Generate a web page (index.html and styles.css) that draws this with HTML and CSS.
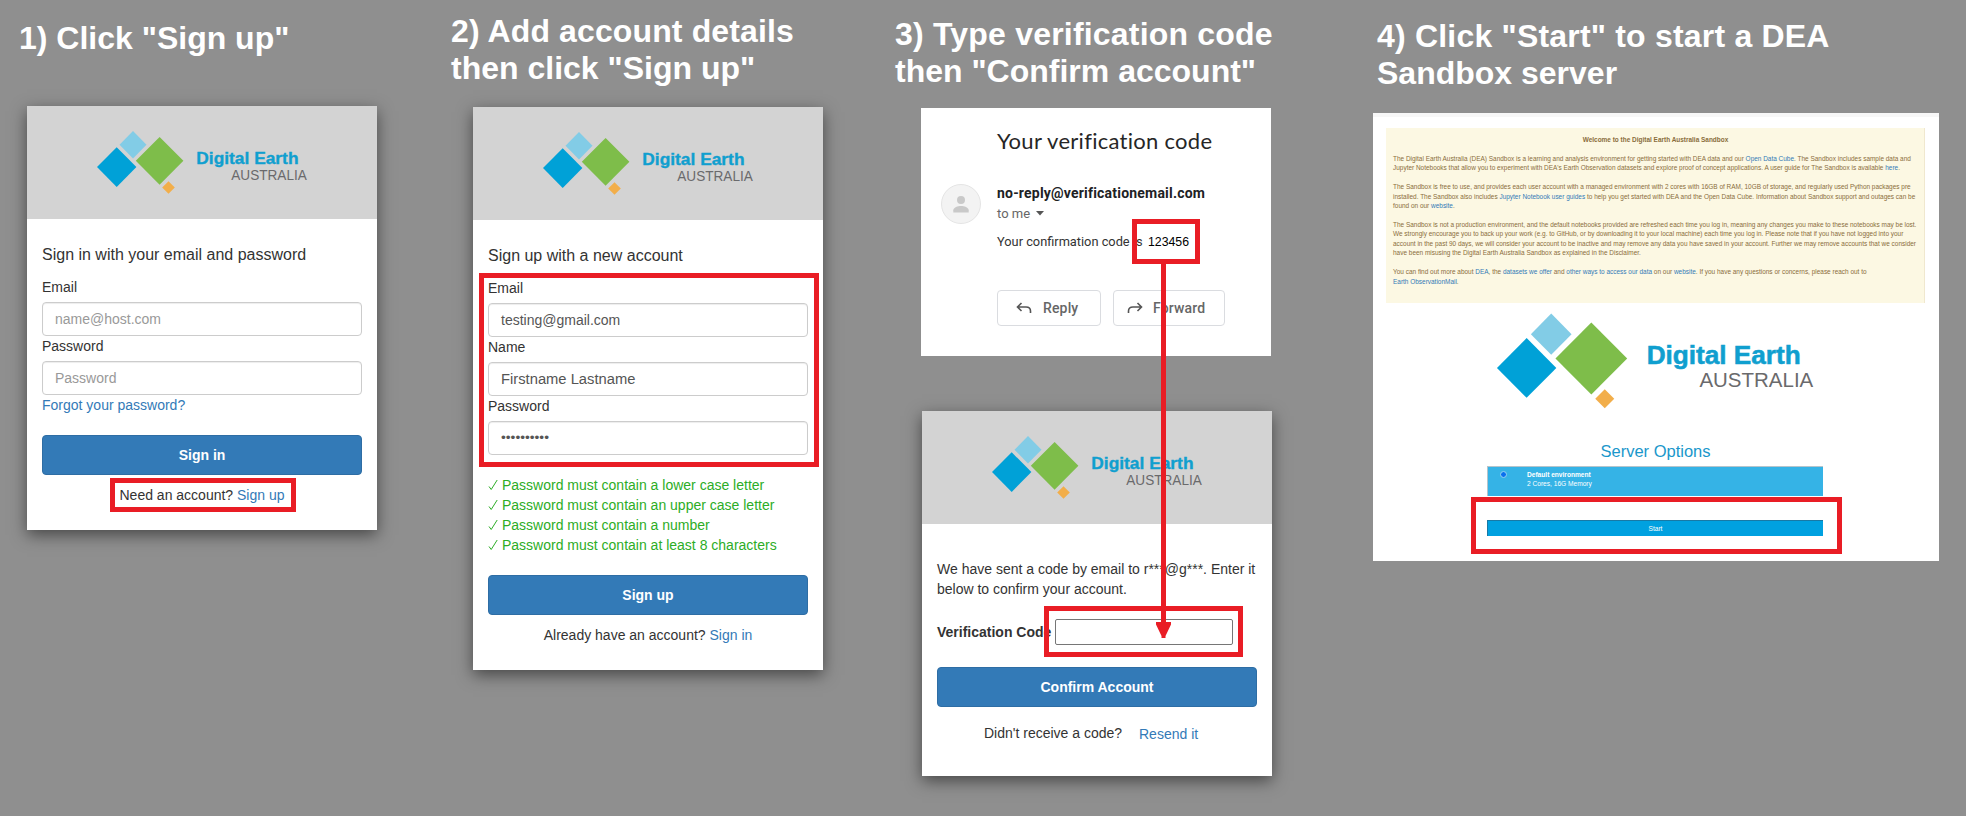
FILE: index.html
```html
<!DOCTYPE html>
<html lang="en">
<head>
<meta charset="utf-8">
<title>Sandbox sign-up steps</title>
<link rel="stylesheet" href="styles.css">
</head>
<body>
<svg class="defs" width="0" height="0" aria-hidden="true">
  <symbol id="logo" viewBox="69 24 213 65" overflow="visible">
    <path fill="#00a1d7" d="M89.700 41.300l19.700 19.800-19.700 19.800L70 61.100z"/>
    <path fill="#82cce6" d="M106 25l13.500 13.700L106 52.400 92.500 38.700z"/>
    <path fill="#7ebd4a" d="M132.600 30.900l23.800 23.900-23.800 23.900-23.800-23.900z"/>
    <path fill="#f2ae4a" d="M141.500 75.200l6.300 6.300-6.300 6.300-6.300-6.300z"/>
    <text class="logo-name" x="169.300" y="58.300" textLength="102.200" lengthAdjust="spacingAndGlyphs">Digital Earth</text>
    <text class="logo-country" x="204.300" y="74" textLength="75.500" lengthAdjust="spacingAndGlyphs">AUSTRALIA</text>
  </symbol>
</svg>

<main class="steps">
  <section class="step step-1">
    <h2>1) Click "Sign up"</h2>
    <div class="card">
      <div class="banner"><svg class="logo"><use href="#logo"/></svg></div>
      <div class="form">
        <p class="form-title">Sign in with your email and password</p>
        <label>Email</label>
        <div class="input placeholder">name@host.com</div>
        <label>Password</label>
        <div class="input placeholder">Password</div>
        <a class="forgot">Forgot your password?</a>
        <div class="btn">Sign in</div>
        <p class="foot">Need an account? <a>Sign up</a></p>
      </div>
      <span class="mark mark-signup"></span>
    </div>
  </section>

  <section class="step step-2">
    <h2><span>2) Add account details</span><br>then click "Sign up"</h2>
    <div class="card">
      <div class="banner"><svg class="logo"><use href="#logo"/></svg></div>
      <div class="form">
        <p class="form-title">Sign up with a new account</p>
        <label>Email</label>
        <div class="input">testing@gmail.com</div>
        <label>Name</label>
        <div class="input name">Firstname Lastname</div>
        <label>Password</label>
        <div class="input dots">••••••••••</div>
        <ul class="rules">
          <li><svg viewBox="0 0 10 12"><path d="M1 7.500L3.200 10.500 9.200 1"/></svg>Password must contain a lower case letter</li>
          <li><svg viewBox="0 0 10 12"><path d="M1 7.500L3.200 10.500 9.200 1"/></svg>Password must contain an upper case letter</li>
          <li><svg viewBox="0 0 10 12"><path d="M1 7.500L3.200 10.500 9.200 1"/></svg>Password must contain a number</li>
          <li><svg viewBox="0 0 10 12"><path d="M1 7.500L3.200 10.500 9.200 1"/></svg>Password must contain at least 8 characters</li>
        </ul>
        <div class="btn">Sign up</div>
        <p class="foot">Already have an account? <a>Sign in</a></p>
      </div>
      <span class="mark mark-details"></span>
    </div>
  </section>

  <section class="step step-3">
    <h2><span>3) Type verification code</span><br>then "Confirm account"</h2>
    <div class="mail">
      <h3>Your verification code</h3>
      <div class="mail-row">
        <svg class="avatar" viewBox="0 0 40 40"><circle cx="20" cy="20" r="19.500" fill="#f3f3f3" stroke="#e4e4e4"/><circle cx="20" cy="16" r="4" fill="#c9c9c9"/><path fill="#c9c9c9" d="M12.300 28.500v-2.200c0-2.800 4.600-4.300 7.700-4.300s7.700 1.500 7.700 4.300v2.200z"/></svg>
        <div class="mail-text">
          <div class="sender">no-reply@verificationemail.com</div>
          <div class="to">to me<svg viewBox="0 0 8 5"><path d="M0 0h8L4 4.500z"/></svg></div>
          <div class="body"><span>Your confirmation code is</span><b>123456</b></div>
        </div>
      </div>
      <div class="mail-actions">
        <div class="reply"><svg viewBox="0 0 16 12"><path d="M5.500 1L1.500 5l4 4M1.500 5h8.500q4.500 0 4.500 4v2"/></svg><span>Reply</span></div>
        <div class="forward"><svg viewBox="0 0 16 12"><path d="M10.500 1l4 4-4 4M14.500 5H6Q1.500 5 1.500 9v2"/></svg><span>Forward</span></div>
      </div>
      <span class="mark mark-code"></span>
    </div>
    <div class="card confirm">
      <div class="banner"><svg class="logo"><use href="#logo"/></svg></div>
      <div class="form">
        <p class="sent">We have sent a code by email to r***@g***. Enter it<br>below to confirm your account.</p>
        <div class="code-row"><strong>Verification Code</strong><div class="code-input"></div></div>
        <div class="btn">Confirm Account</div>
        <p class="resend"><span>Didn't receive a code?</span><a>Resend it</a></p>
      </div>
      <span class="mark mark-input"></span>
    </div>
    <svg class="arrow" viewBox="0 0 15 374"><path d="M5 0h5v358h5v2.500l-5.500 11.500v2h-4v-2L0 360.500V358h5z"/></svg>
  </section>

  <section class="step step-4">
    <h2><span>4) Click "Start" to start a DEA</span><br>Sandbox server</h2>
    <div class="sandbox">
      <div class="notice">
        <p class="notice-title">Welcome to the Digital Earth Australia Sandbox</p>
        <p>The Digital Earth Australia (DEA) Sandbox is a learning and analysis environment for getting started with DEA data and our <a>Open Data Cube</a>. The Sandbox includes sample data and<br>Jupyter Notebooks that allow you to experiment with DEA's Earth Observation datasets and explore proof of concept applications. A user guide for The Sandbox is available <a>here</a>.</p>
        <p>The Sandbox is free to use, and provides each user account with a managed environment with 2 cores with 16GB of RAM, 10GB of storage, and regularly used Python packages pre<br>installed. The Sandbox also includes <a>Jupyter Notebook user guides</a> to help you get started with DEA and the Open Data Cube. Information about Sandbox support and outages can be<br>found on our <a>website</a>.</p>
        <p>The Sandbox is not a production environment, and the default notebooks provided are refreshed each time you log in, meaning any changes you make to these notebooks may be lost.<br>We strongly encourage you to back up your work (e.g. to GitHub, or by downloading it to your local machine) each time you log in. Please note that if you have not logged into your<br>account in the past 90 days, we will consider your account to be inactive and may remove any data you have saved in your account. Further we may remove accounts that we consider<br>have been misusing the Digital Earth Australia Sandbox as explained in the Disclaimer.</p>
        <p>You can find out more about <a>DEA</a>, the <a>datasets we offer</a> and <a>other ways to access our data</a> on our <a>website</a>. If you have any questions or concerns, please reach out to<br><a>Earth ObservationMail</a>.</p>
      </div>
      <svg class="logo-large"><use href="#logo"/></svg>
      <h4>Server Options</h4>
      <div class="option"><i></i><div><b>Default environment</b><br>2 Cores, 16G Memory</div></div>
      <div class="start">Start</div>
      <span class="mark mark-start"></span>
    </div>
  </section>
</main>
</body>
</html>
```
FILE: styles.css
```css
* { box-sizing: border-box; }

body {
  margin: 0;
  background: #8f8f8f;
  color: #333;
  font: 14px/20px "Liberation Sans", Arial, sans-serif;
}

p, h2, h3, h4, ul { margin: 0; padding: 0; }
a { color: #337ab7; }
.defs { display: block; height: 0; }

.steps {
  display: grid;
  grid-template-columns: 446px 444px 476px 600px;
  height: 816px;
  overflow: hidden;
}
.step { position: relative; }

h2 {
  color: #fff;
  font-size: 32px;
  line-height: 37px;
  font-weight: 700;
  white-space: nowrap;
}
.step-1 { padding: 20px 0 0 19px; }
.step-2 { padding: 13px 0 0 5px; }
.step-3 { padding: 16px 0 0 5px; }
.step-4 { padding: 18px 0 0 11px; }
.step-2 h2 span { letter-spacing: .12px; }
.step-3 h2 span, .step-4 h2 span { letter-spacing: .2px; }

/* account cards */
.card {
  position: relative;
  width: 350px;
  background: #fff;
  box-shadow: 0 5px 15px rgba(0, 0, 0, .5);
}
.step-1 .card { margin: 49px 0 0 8px; height: 424px; }
.step-2 .card { margin: 20px 0 0 22px; height: 563px; }
.step-3 .card { margin: 55px 0 0 27px; height: 365px; }

.banner { height: 113px; background: #d3d3d3; padding: 24px 0 0 69px; }
.logo { display: block; width: 213px; height: 65px; }
.logo-name { font: 700 16.500px "Liberation Sans", Arial, sans-serif; fill: #109fcf; stroke: #109fcf; stroke-width: .35; }
.logo-country { font: 14px "Liberation Sans", Arial, sans-serif; fill: #6a6a6c; }

.form { padding: 24px 15px 0; }
.form-title { font-size: 16px; line-height: 23px; margin-bottom: 11px; }
label { display: block; margin-bottom: 5px; }
.input {
  height: 34px;
  padding: 6px 12px;
  border: 1px solid #ccc;
  border-radius: 4px;
  color: #555;
  box-shadow: inset 0 1px 1px rgba(0, 0, 0, .075);
}
.input.placeholder { color: #999; }
.input.name { font-size: 14.750px; }
.input.dots { font-size: 13.700px; }
.forgot { display: block; margin-bottom: 20px; }
.btn {
  height: 40px;
  border: 1px solid #2e6da4;
  border-radius: 4px;
  background: #337ab7;
  color: #fff;
  font-weight: 700;
  line-height: 38px;
  text-align: center;
}
.foot { margin-top: 10px; text-align: center; }

.rules { list-style: none; margin: 20px 0; color: #2cad26; }
.rules li { display: flex; align-items: center; white-space: nowrap; }
.rules svg { width: 10px; height: 12px; margin-right: 4px; fill: none; stroke: currentColor; stroke-width: 1; }

.confirm .form { padding-top: 35px; }
.sent { white-space: nowrap; }
.code-row { display: flex; align-items: center; margin: 20px 0 22px; height: 26px; white-space: nowrap; }
.code-row strong { width: 118px; }
.code-input { width: 178px; height: 26px; border: 1px solid #767676; border-radius: 2px; }
.resend { display: flex; margin: 16px 0 0 47px; }
.resend span { width: 155px; }
.resend a { padding-top: 1px; }

/* email panel */
.mail {
  position: relative;
  width: 350px;
  height: 248px;
  margin: 18px 0 0 26px;
  padding: 18px 0 0 20px;
  background: #fff;
}
.mail h3 {
  margin-left: 56px;
  font: 400 22px/30px Lato, sans-serif;
  font-variant-ligatures: none;
  letter-spacing: .28px;
  color: #262626;
  white-space: nowrap;
}
.mail-row { display: flex; margin-top: 28px; }
.avatar { width: 40px; height: 40px; margin-right: 16px; }
.mail-text { font-family: Roboto, sans-serif; white-space: nowrap; height: 86px; }
.sender { font-size: 14px; font-weight: 700; line-height: 18px; letter-spacing: .2px; color: #202124; }
.to { font-size: 13px; line-height: 20px; margin-top: 2px; color: #666; }
.to svg { width: 8px; height: 5px; margin: 0 0 2px 6px; fill: #555; }
.body { font-size: 12.800px; line-height: 20px; margin-top: 8px; color: #333; display: flex; }
.body span { width: 151px; }
.body b { font: 12.300px/20px "Liberation Sans", Arial, sans-serif; color: #000; }
.mail-actions { display: flex; gap: 12px; margin: 20px 0 0 56px; }
.mail-actions div {
  display: flex;
  align-items: center;
  height: 36px;
  border: 1px solid #dadce0;
  border-radius: 4px;
  color: #666;
  font: 500 14px/20px Roboto, sans-serif;
  letter-spacing: .15px;
}
.mail-actions svg { width: 16px; height: 12px; fill: none; stroke: #555; stroke-width: 1.600; }
.reply { width: 104px; padding-left: 18px; gap: 11px; }
.forward { width: 112px; padding-left: 13px; gap: 10px; }

/* sandbox panel */
.sandbox {
  position: relative;
  width: 566px;
  height: 448px;
  margin: 21px 0 0 -4px;
  padding: 11px 14px 0 13px;
  background: #fff;
  border-top: 4px solid #f7f7f7;
}
.notice {
  height: 175px;
  padding: 7px 0 0 7px;
  border-right: 1px solid #f0e8cf;
  background: #fcf8e3;
  color: #8a6d3b;
  font-size: 6.460px;
  line-height: 9.430px;
  white-space: nowrap;
}
.notice p { margin-bottom: 9.430px; }
.notice .notice-title { padding-right: 6px; text-align: center; font-weight: 700; }
.logo-large { display: block; width: 322px; height: 98px; margin: 9px 0 0 109px; }
h4 {
  margin-top: 34px;
  text-align: center;
  font-size: 16.500px;
  line-height: 14px;
  font-weight: 400;
  color: #1a97cb;
}
.option {
  display: flex;
  width: 336px;
  height: 30px;
  margin: 8px 0 0 101px;
  padding: 3px 0 0 13px;
  border: solid #b5c4cb;
  border-width: 1px 0 0 1px;
  background: #35b3e6;
  color: #fff;
  font-size: 6.600px;
  line-height: 9.400px;
}
.option i { width: 5px; height: 5px; margin: 2px 21px 0 0; border-radius: 50%; background: #0b6fee; outline: 1px solid #8fc9f3; }
.start {
  width: 336px;
  height: 16px;
  margin: 24px 0 0 101px;
  border: solid #1879a5;
  border-width: 1px 0 0 1px;
  background: #00a1e0;
  color: #fff;
  font-size: 6.600px;
  line-height: 16px;
  text-align: center;
}

/* red annotations laid over the panels */
.mark { position: absolute; border: 5px solid #e91d25; }
.mark-signup { left: 83px; top: 372px; width: 186px; height: 34px; }
.mark-details { left: 6px; top: 166px; width: 340px; height: 194px; }
.mark-code { left: 211px; top: 111px; width: 68px; height: 45px; }
.mark-input { left: 122px; top: 195px; width: 199px; height: 51px; }
.mark-start { left: 98px; top: 380px; width: 371px; height: 57px; }
.arrow { position: absolute; left: 271px; top: 264px; width: 15px; height: 374px; fill: #e91d25; }
.step-3 .arrow { left: 266px; }
```
